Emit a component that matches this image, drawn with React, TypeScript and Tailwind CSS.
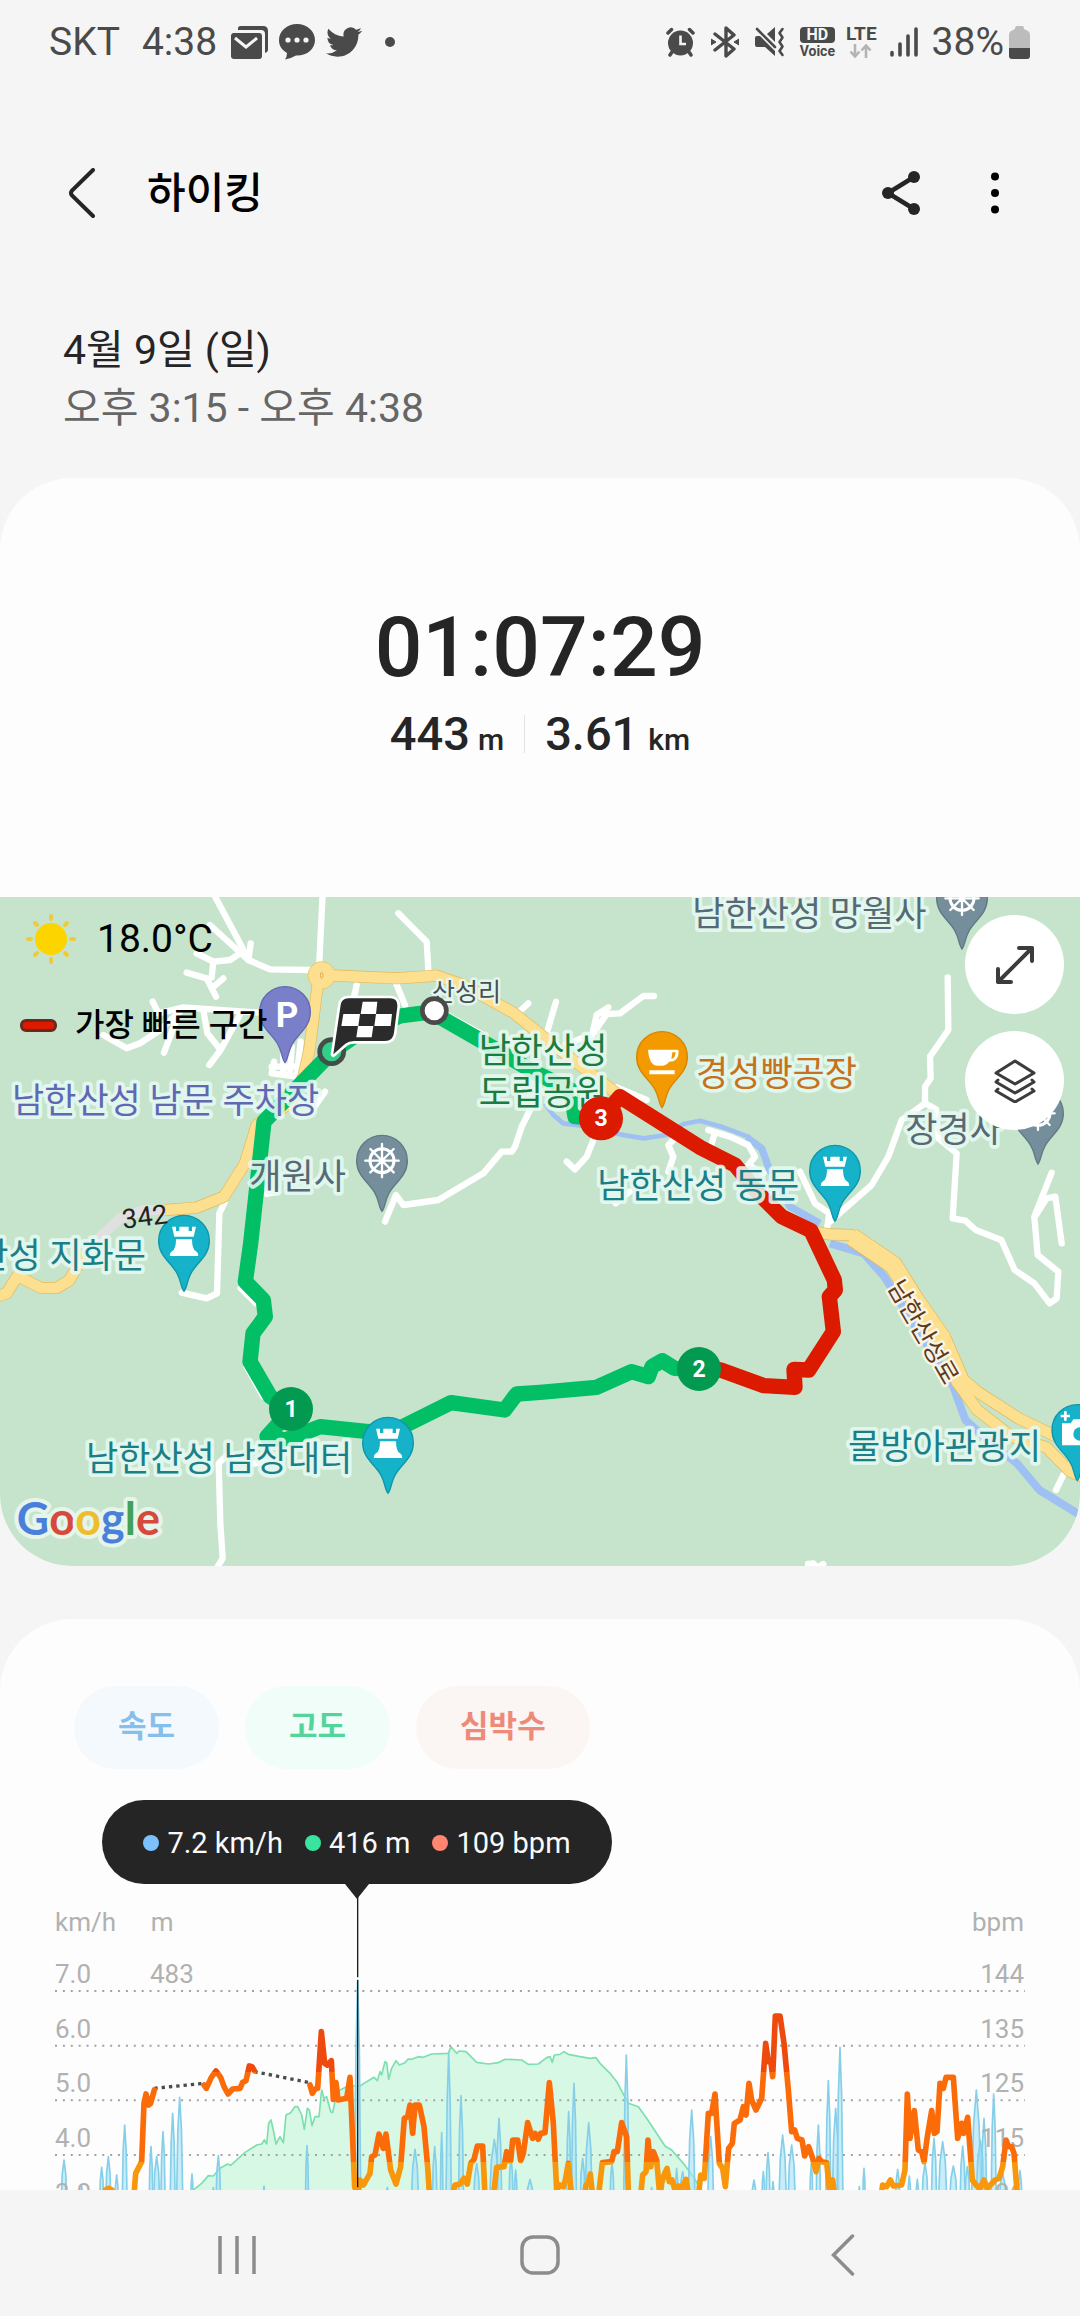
import type { ReactNode } from "react";

const FONT = "font-['Roboto','Noto_Sans_CJK_KR',sans-serif]";

/* ---------- status bar icons ---------- */

function MailIcon() {
  return (
    <svg viewBox="0 0 37 34" className="h-[34px] w-[37px]" aria-hidden="true">
      <path d="M7 3 Q7 1 10 1 H32 Q37 1 37 6 V25 Q37 27 34 28 V9 Q34 5 30 5 H7Z" fill="#4a4a4a" />
      <rect x="0" y="8" width="31" height="26" rx="3" fill="#4a4a4a" />
      <path d="M4 13 L15 22 L26 13" fill="none" stroke="#f5f5f5" strokeWidth="3" />
    </svg>
  );
}

function ChatIcon() {
  return (
    <svg viewBox="0 0 36 36" className="h-[36px] w-[36px]" aria-hidden="true">
      <path d="M18 0 C8 0 0 7 0 16 C0 22 3 26 8 29 Q8 33 6 35.500 Q13 34 17 31.500 C28 32 36 25 36 16 C36 7 28 0 18 0Z" fill="#4a4a4a" />
      <circle cx="9" cy="16" r="2.600" fill="#f5f5f5" />
      <circle cx="18" cy="16" r="2.600" fill="#f5f5f5" />
      <circle cx="27" cy="16" r="2.600" fill="#f5f5f5" />
    </svg>
  );
}

function TwitterIcon() {
  return (
    <svg viewBox="0 2 24 20" className="h-[30px] w-[36px]" aria-hidden="true">
      <path
        fill="#4a4a4a"
        d="M23.953 4.570a10 10 0 01-2.825.775 4.958 4.958 0 002.163-2.723c-.951.555-2.005.959-3.127 1.184a4.920 4.920 0 00-8.384 4.482C7.690 8.095 4.067 6.130 1.640 3.162a4.822 4.822 0 00-.666 2.475c0 1.710.870 3.213 2.188 4.096a4.904 4.904 0 01-2.228-.616v.060a4.923 4.923 0 003.946 4.827 4.996 4.996 0 01-2.212.085 4.936 4.936 0 004.604 3.417 9.867 9.867 0 01-6.102 2.105c-.390 0-.779-.023-1.170-.067a13.995 13.995 0 007.557 2.209c9.053 0 13.998-7.496 13.998-13.985 0-.210 0-.420-.015-.630A9.935 9.935 0 0024 4.590z"
      />
    </svg>
  );
}

function AlarmIcon() {
  return (
    <svg viewBox="0 0 29 30" className="h-[30px] w-[29px]" aria-hidden="true">
      <g stroke="#4a4a4a" strokeWidth="3.500" strokeLinecap="round">
        <path d="M2 6 L5.500 2.500 M27 6 L23.500 2.500 M6 25 L4 28 M23 25 L25 28" />
      </g>
      <circle cx="14.500" cy="16" r="12.500" fill="#4a4a4a" />
      <path d="M14.500 8.500 V17 H20" fill="none" stroke="#f5f5f5" strokeWidth="2.600" />
    </svg>
  );
}

function BluetoothIcon() {
  return (
    <svg viewBox="0 0 28 32" className="h-[32px] w-[28px]" aria-hidden="true">
      <path d="M4 8 L23 23 L15 30 V2 L23 9 L4 24" fill="none" stroke="#4a4a4a" strokeWidth="3.400" strokeLinejoin="round" strokeLinecap="round" />
      <path d="M0 13 L5 16 L0 19Z M28 13 L23 16 L28 19Z" fill="#4a4a4a" stroke="#4a4a4a" strokeWidth="1" strokeLinejoin="round" />
    </svg>
  );
}

function MuteIcon() {
  return (
    <svg viewBox="0 0 30 30" className="h-[30px] w-[30px]" aria-hidden="true">
      <path d="M0 11 Q0 9 2 9 H5 L20 24 V29 L10 20 H2 Q0 20 0 18Z" fill="#4a4a4a" />
      <path d="M12 7 L20 0 V15Z" fill="#4a4a4a" />
      <path d="M2 2 L20 20" stroke="#4a4a4a" strokeWidth="2.600" strokeLinecap="round" />
      <path d="M27.500 2 L24.500 6 L27.500 10.500 L24.500 15 L27.500 19.500 L24.500 24 L27.500 28" fill="none" stroke="#4a4a4a" strokeWidth="2.600" strokeLinecap="round" strokeLinejoin="round" />
    </svg>
  );
}

function SignalIcon() {
  return (
    <svg viewBox="0 0 28 30" className="h-[30px] w-[28px]" aria-hidden="true">
      <path d="M2 25.500 V28 M10 17 V28 M18 9 V28 M26 2 V28" stroke="#4a4a4a" strokeWidth="3.600" strokeLinecap="round" />
    </svg>
  );
}

function BatteryIcon() {
  return (
    <svg viewBox="0 0 21 33" className="h-[33px] w-[21px]" aria-hidden="true">
      <path d="M6 3 Q6 0 8 0 H13 Q15 0 15 3 L19 5 Q21 6 21 9 V22 H0 V9 Q0 6 2 5Z" fill="#bcbcbc" />
      <path d="M0 22 H21 V30 Q21 33 18 33 H3 Q0 33 0 30Z" fill="#4a4a4a" />
    </svg>
  );
}

function StatusBar() {
  return (
    <div className="flex h-[84px] shrink-0 items-center justify-between pr-[50px] pl-[49px] text-[39px] leading-none text-[#4a4a4a]">
      <div className="flex items-center">
        <span>SKT</span>
        <span className="ml-[22px]">4:38</span>
        <div className="ml-[14px] flex items-center gap-[11px]">
          <MailIcon />
          <ChatIcon />
          <TwitterIcon />
        </div>
        <span className="ml-[23px] size-[10px] rounded-full bg-[#4a4a4a]" />
      </div>
      <div className="flex items-center">
        <div className="flex items-center gap-[16px]">
          <AlarmIcon />
          <BluetoothIcon />
          <MuteIcon />
        </div>
        <div className="ml-[15px] flex flex-col items-center gap-[2px]">
          <span className="flex h-[16px] w-[35px] items-center justify-center rounded-[4px] bg-[#4a4a4a] text-[16px] leading-none font-bold text-[#f5f5f5]">HD</span>
          <span className="text-[14px] leading-[12px] font-bold">Voice</span>
        </div>
        <div className="ml-[11px] flex flex-col items-center gap-[2px]">
          <span className="text-[19px] leading-[16px] font-bold">LTE</span>
          <svg viewBox="0 0 24 14" className="h-[14px] w-[24px]" aria-hidden="true">
            <path d="M6 0 V12 M1.500 7.500 L6 12.500 L10.500 7.500 M17 14 V2 M12.500 6.500 L17 1.500 L21.500 6.500" fill="none" stroke="#b4b4b4" strokeWidth="2.600" />
          </svg>
        </div>
        <div className="ml-[13px]">
          <SignalIcon />
        </div>
        <span className="ml-[14px]">38%</span>
        <div className="ml-[5px]">
          <BatteryIcon />
        </div>
      </div>
    </div>
  );
}

/* ---------- header ---------- */

function Header() {
  return (
    <header className="flex h-[218px] shrink-0 items-center pr-[55px] pl-[52px]">
      <button type="button" aria-label="뒤로" className="flex size-[60px] items-center justify-center">
        <svg viewBox="0 0 26 50" className="h-[50px] w-[26px]">
          <path d="M24 2 L3 22.500 Q1 25 3 27.500 L24 48" fill="none" stroke="#252525" strokeWidth="4" strokeLinecap="round" />
        </svg>
      </button>
      <h1 className="ml-[35px] flex-1 pt-[2px] text-[42px] leading-[60px] font-medium text-black">하이킹</h1>
      <button type="button" aria-label="공유" className="flex size-[60px] items-center justify-center">
        <svg viewBox="0 0 38 44" className="h-[44px] w-[38px]">
          <path d="M32 6 L6 22 L32 38" fill="none" stroke="#252525" strokeWidth="4.600" />
          <circle cx="6" cy="22" r="6" fill="#252525" />
          <circle cx="32" cy="6" r="6" fill="#252525" />
          <circle cx="32" cy="38" r="6" fill="#252525" />
        </svg>
      </button>
      <button type="button" aria-label="더보기" className="ml-[34px] flex size-[60px] items-center justify-center">
        <svg viewBox="0 0 8 42" className="h-[42px] w-[8px]">
          <circle cx="4" cy="4.500" r="4" />
          <circle cx="4" cy="21" r="4" />
          <circle cx="4" cy="37.500" r="4" />
        </svg>
      </button>
    </header>
  );
}

/* ---------- map ---------- */

const ROADS = [
  "M640 10 L720 160 L745 210 L810 238 L930 240",
  "M630 105 L745 210 L752 160",
  "M590 190 L640 215 L690 210 L720 190",
  "M560 248 L620 265 L648 320 M640 215 L635 262 M670 265 L635 295",
  "M968 10 L958 215",
  "M458 335 L475 370 L550 352 L780 368",
  "M310 435 L380 475 L420 460 L480 420 L550 355 M492 488 L525 400",
  "M610 360 L622 430 L662 480 L628 525 M662 480 L722 370",
  "M822 515 L815 550 L890 560 L902 455 M850 490 V550 M875 470 L870 550 M815 530 H895",
  "M975 605 L940 655",
  "M1070 285 L1060 330",
  "M800 912 L832 906",
  "M675 935 L658 970 L651 1210 L620 1225 L545 1208",
  "M1195 70 L1280 155 L1285 240",
  "M1190 285 L1215 345",
  "M1340 375 L1440 430 L1540 500 L1640 560",
  "M1585 340 L1550 372",
  "M1668 335 L1640 430",
  "M1962 318 H1930 L1860 370 L1820 372 L1780 430 L1660 480 M1825 352 L1790 375 L1775 440",
  "M1590 660 L1565 710 L1545 770 L1535 785 L1505 785 L1450 850 L1315 930 L1210 945 L1188 915 L1155 995",
  "M1700 815 L1725 838 L1760 800 L1782 745",
  "M1850 592 L1940 630",
  "M2020 750 L2005 765 L2020 800 L2005 845",
  "M2125 720 L2190 740 L2245 765 L2265 800 L2245 825 L2290 850 M2145 728 L2132 770",
  "M2843 262 L2845 420 L2790 500 L2792 565 L2775 590 V640 L2705 690 L2665 800 L2615 885 L2490 995",
  "M2400 845 L2445 940 L2488 970 L2482 1010",
  "M2775 640 L2808 658 L2815 745 L2870 790 L2858 985 L2896 992 L2927 1020 L3004 1050 L3044 1140 L3103 1180 L3149 1240 L3170 1225 L3175 1145 L3113 1095 L3103 980 L3155 848",
  "M3108 975 L3140 925 L3166 920 L3185 1060",
  "M800 1715 L754 1722 L682 1695 L656 1720 L661 1900 L668 2005 L650 2035",
  "M3190 1755 L3168 1800",
  "M2424 2022 L2440 2020 L2452 2034 L2470 2022",
  "M1847 940 L1889 905",
  "M722 1195 L768 1240 M740 1430 L790 1520",
];

const HIGHWAYS = [
  "M965 255 L1190 265 L1310 257 L1390 285 L1540 368 L1680 480 L1840 602 L1900 650",
  "M955 270 L928 480 L910 560 L870 640 L770 705 L735 820 L672 920 L590 953 L495 960",
  "M250 1085 L232 1130 L207 1172 L170 1194 L124 1194 L52 1158 L20 1210 L-20 1222",
  "M2440 1025 L2488 1033 L2555 1035 L2680 1118 L2746 1220 L2839 1350 L2891 1470 L2932 1505 L3056 1585 L3170 1640 L3260 1680",
  "M2850 1420 L2870 1475 L2932 1560 L3035 1640 L3139 1672 L3211 1745 L3260 1765",
];

const GREEN_ROUTE =
  "M1300 365 L1200 378 L1090 420 L995 487 L792 695 L752 1060 L736 1175 L790 1230 L796 1280 L759 1330 L750 1415 L811 1520 L873 1560 L801 1640 L857 1650 L961 1610 L1105 1625 L1188 1620 L1353 1538 L1514 1560 L1550 1512 L1620 1507 L1790 1492 L1894 1445 L1945 1460 L1956 1430 L1987 1412 L2023 1435 L2095 1437 M1300 370 L1440 450 L1600 545 L1712 600 L1725 680 L1800 685";

const RED_ROUTE =
  "M1803 685 L1860 620 L2100 772 L2205 825 L2275 910 L2345 980 L2433 1022 L2503 1170 L2506 1200 L2488 1220 L2500 1325 L2426 1440 L2382 1438 L2385 1492 L2292 1487 L2162 1440 L2097 1437";

type Label = { x: number; y: number; text: string; fill: string; end?: boolean };

const GRAY = "#566a76";
const TEAL = "#1b7f88";

const LABELS: Label[] = [
  { x: 36, y: 668, text: "남한산성 남문 주차장", fill: "#6068b4" },
  { x: 748, y: 896, text: "개원사", fill: GRAY },
  { x: 1436, y: 518, text: "남한산성", fill: "#1a7c3e" },
  { x: 1436, y: 646, text: "도립공원", fill: "#1a7c3e" },
  { x: 2088, y: 588, text: "경성빵공장", fill: "#c6721c" },
  { x: 2077, y: 108, text: "남한산성 망월사", fill: GRAY },
  { x: 2716, y: 756, text: "장경사", fill: GRAY },
  { x: 1792, y: 924, text: "남한산성 동문", fill: TEAL },
  { x: 438, y: 1134, text: "남한산성 지화문", fill: TEAL, end: true },
  { x: 258, y: 1742, text: "남한산성 남장대터", fill: TEAL },
  { x: 2544, y: 1708, text: "물방아관광지", fill: TEAL },
];

function Pin({ x, y, fill, edge, children }: { x: number; y: number; fill: string; edge: string; children: ReactNode }) {
  return (
    <g transform={`translate(${x} ${y})`}>
      <path
        d="M0 2 C-10 -10 -8 -30 -22 -54 C-40 -86 -76 -104 -76 -150 A76 76 0 0 1 76 -150 C76 -104 40 -86 22 -54 C8 -30 10 -10 0 2Z"
        fill={fill}
        stroke={edge}
        strokeWidth="4"
      />
      <g transform="translate(0 -150)">{children}</g>
    </g>
  );
}

function Castle() {
  return (
    <path
      fill="#fff"
      d="M-36 -42 H-24 V-29 H-14 V-42 H14 V-29 H24 V-42 H36 L29 -12 H-29Z M-24 -4 H24 Q24 26 36 32 Q43 36 43 46 H-43 Q-43 36 -36 32 Q-24 26 -24 -4Z"
    />
  );
}

function Wheel() {
  return (
    <g stroke="#fff" fill="none" strokeLinecap="round">
      <circle r="36" strokeWidth="9" />
      <path d="M0 -50 V50 M-50 0 H50 M-35 -35 L35 35 M-35 35 L35 -35" strokeWidth="7" />
      <circle r="9" fill="#fff" />
    </g>
  );
}

function KmMarker({ x, y, n, fill }: { x: number; y: number; n: string; fill: string }) {
  return (
    <g>
      <circle cx={x} cy={y} r="66" fill={fill} />
      <text x={x} y={y + 24} textAnchor="middle" fontSize="69" fontWeight="700" fill="#fff">
        {n}
      </text>
    </g>
  );
}

function HikeMap() {
  return (
    <svg viewBox="0 21 3240 2007" className="block h-auto w-full" role="img" aria-label="하이킹 경로 지도">
      <rect y="21" width="3240" height="2007" fill="#c5e4cb" />
      <g fill="none" stroke="#9fc0f3" strokeLinejoin="round">
        <path strokeWidth="14" d="M1635 640 L1660 675 L1690 700 L1750 708 L1860 733 L1930 745 L2000 735 L2050 702 L2100 692 L2170 712 L2250 742" />
        <path strokeWidth="22" d="M2240 742 L2285 775 L2305 830 L2370 950 L2460 1000" />
        <path strokeWidth="24" d="M2490 1060 L2591 1090 L2653 1160 L2715 1260 L2860 1490 L2896 1590 L2963 1650 L3051 1720 L3118 1800 L3245 1878" />
      </g>
      <g fill="none" stroke="#fff" strokeWidth="19" strokeLinecap="round" strokeLinejoin="round">
        {ROADS.map((d) => (
          <path key={d} d={d} />
        ))}
      </g>
      <path d="M505 960 L430 960 L360 985 L300 1040 L250 1095" fill="none" stroke="#dfe0df" strokeWidth="30" />
      <g fill="none" strokeLinejoin="round">
        <g stroke="#e3b95a" strokeWidth="36">
          {HIGHWAYS.map((d) => (
            <path key={d} d={d} />
          ))}
          <path d="M2555 1040 L2680 1125 L2746 1230 L2830 1350" strokeWidth="56" />
        </g>
        <circle cx="965" cy="256" r="41" fill="#fddf90" stroke="#e3b95a" strokeWidth="2" />
        <g stroke="#fddf90" strokeWidth="32">
          {HIGHWAYS.map((d) => (
            <path key={d} d={d} />
          ))}
          <path d="M2555 1040 L2680 1125 L2746 1230 L2830 1350" strokeWidth="52" />
        </g>
        <ellipse cx="965" cy="256" rx="4" ry="9" stroke="#dcae4a" strokeWidth="3" />
      </g>

      <g fill="none" strokeWidth="46" strokeLinejoin="round" strokeLinecap="round">
        <path d={GREEN_ROUTE} stroke="#02bf65" />
        <path d={RED_ROUTE} stroke="#dc1a00" />
      </g>

      <Pin x={855} y={516} fill="#7a7fc9" edge="#6468b0">
        <text x="6" y="46" textAnchor="middle" fontSize="105" fontWeight="700" fill="#fff">
          P
        </text>
      </Pin>
      <Pin x={1146} y={962} fill="#758e9c" edge="#617885">
        <Wheel />
      </Pin>
      <Pin x={2886} y={175} fill="#758e9c" edge="#617885">
        <Wheel />
      </Pin>
      <Pin x={3114} y={820} fill="#758e9c" edge="#617885">
        <Wheel />
      </Pin>
      <Pin x={1986} y={651} fill="#f29a00" edge="#d98200">
        <path fill="#fff" d="M-42 -22 H46 Q50 -22 50 -16 Q50 14 22 14 Q12 26 0 26 H-14 Q-38 26 -42 -22Z M-38 40 H38 V52 H-38Z" />
        <path d="M31 -14 H41 Q40 4 28 6Z" fill="#f29a00" />
      </Pin>
      <Pin x={2505} y={992} fill="#15b2c9" edge="#0e96ab">
        <Castle />
      </Pin>
      <Pin x={552} y={1202} fill="#15b2c9" edge="#0e96ab">
        <Castle />
      </Pin>

      <g fontSize="105" strokeLinejoin="round" strokeWidth="22" stroke="#e6f9f2" strokeOpacity="0.9" style={{ paintOrder: "stroke" }}>
        <text x="1296" y="333" fontSize="75" fill="#474e56" strokeWidth="15">
          산성리
        </text>
        {LABELS.map((l) => (
          <text key={l.text} x={l.x} y={l.y} fill={l.fill} textAnchor={l.end ? "end" : "start"}>
            {l.text}
          </text>
        ))}
        <text transform="translate(2770 1326) rotate(60)" textAnchor="middle" y="26" fontSize="75" strokeWidth="15" stroke="#fff8ea" fill="#5c3a1c">
          남한산성로
        </text>
        <text transform="translate(370 1016) rotate(-7)" fontSize="81" stroke="none" fill="#222">
          342
        </text>
      </g>

      <Pin x={1164} y={1808} fill="#15b2c9" edge="#0e96ab">
        <Castle />
      </Pin>
      <Pin x={3232} y={1770} fill="#15b2c9" edge="#0e96ab">
        <path fill="#fff" d="M-46 -20 H-20 L-12 -32 H30 V46 H-46Z M-50 -46 H-40 V-56 H-32 V-46 H-22 V-38 H-32 V-28 H-40 V-38 H-50Z" />
        <circle cx="8" cy="12" r="20" fill="#15b2c9" />
      </Pin>

      <KmMarker x={873} y={1557} n="1" fill="#029a51" />
      <KmMarker x={2097} y={1437} n="2" fill="#029a51" />
      <KmMarker x={1803} y={685} n="3" fill="#dc1a00" />

      <circle cx="1303" cy="362" r="36" fill="#fff" stroke="#4a4a4a" strokeWidth="14" />
      <circle cx="995" cy="485" r="36" fill="#2fd188" stroke="#454d49" strokeWidth="14" />
      <path
        d="M1045 325 H1170 Q1194 325 1192 350 L1182 428 Q1179 453 1155 453 H1062 Q1046 453 1036 461 L1000 493 L1022 345 Q1025 325 1045 325Z"
        fill="#2b2b2b"
        stroke="#fff"
        strokeWidth="16"
        strokeLinejoin="round"
        style={{ paintOrder: "stroke" }}
      />
      <path d="M1088 335 H1132 L1128 372 H1082Z M1030 372 H1080 L1075 408 H1024Z M1128 372 H1176 L1172 408 H1123Z M1074 408 H1120 L1115 442 H1069Z" fill="#fff" />

      <g fontFamily="Lato" fontSize="135" fontWeight="700" strokeLinejoin="round">
        <text x="50" y="1934" stroke="#e6f5ea" strokeWidth="24" style={{ paintOrder: "stroke" }}>
          <tspan fill="#4a80dc">G</tspan>
          <tspan fill="#d54a3d">o</tspan>
          <tspan fill="#edbd2c">o</tspan>
          <tspan fill="#4a80dc">g</tspan>
          <tspan fill="#45a158">l</tspan>
          <tspan fill="#d54a3d">e</tspan>
        </text>
      </g>
    </svg>
  );
}

function MapPanel() {
  return (
    <div className="relative">
      <HikeMap />
      <div className="absolute top-[17px] left-[20px] flex flex-col gap-[36px] text-black">
        <div className="flex h-[50px] items-center">
          <svg viewBox="-25 -25 50 50" className="ml-[6px] size-[50px]" aria-hidden="true">
            <g stroke="#eecb3c" strokeWidth="4" strokeLinecap="round">
              <path d="M0 -23 V-20 M0 23 V20 M-23 0 H-20 M23 0 H20 M-16 -16 L-14 -14 M16 -16 L14 -14 M-16 16 L-14 14 M16 16 L14 14" />
            </g>
            <circle r="16" fill="#fcd400" />
          </svg>
          <span className="ml-[21px] text-[39px] leading-[50px]">18.0°C</span>
        </div>
        <div className="flex h-[50px] items-center">
          <span className="h-[13px] w-[37px] rounded-[6px] border-3 border-[#6b2a20] bg-[#dc1a00]" />
          <span className="ml-[18px] text-[32px] leading-[50px] font-medium">가장 빠른 구간</span>
        </div>
      </div>
      <div className="absolute top-[18px] right-[16px] flex flex-col gap-[17px]">
        <button type="button" aria-label="지도 확대" className="flex size-[99px] items-center justify-center rounded-full bg-white">
          <svg viewBox="0 0 38 38" className="size-[38px]" fill="none" stroke="#3c3c3c" strokeWidth="4" strokeLinecap="round" strokeLinejoin="round">
            <path d="M2 36 L36 2 M23 2 H36 V15 M2 23 V36 H15" />
          </svg>
        </button>
        <button type="button" aria-label="지도 유형" className="flex size-[99px] items-center justify-center rounded-full bg-white">
          <svg viewBox="0 0 44 44" className="size-[44px]" fill="none" stroke="#3c3c3c" strokeWidth="3" strokeLinecap="round" strokeLinejoin="round">
            <path d="M22 2 L41 14 L22 25 L3 14Z" />
            <path d="M5 21 L3 23 L22 34 L41 23 L39 21" />
            <path d="M5 30 L3 32 L22 43 L41 32 L39 30" />
          </svg>
        </button>
      </div>
    </div>
  );
}

/* ---------- summary ---------- */

function Summary() {
  return (
    <section className="overflow-hidden rounded-[72px] bg-[#fdfdfd]">
      <div className="flex flex-col items-center pt-[120px] pb-[133px] font-medium text-[#252525]">
        <p className="text-[84px] leading-[100px]">01:07:29</p>
        <div className="mt-[6px] flex items-center text-[47px] leading-[60px]">
          <p>
            443<span className="ml-[8px] text-[30px] leading-none">m</span>
          </p>
          <span className="mx-[20px] h-[38px] w-px bg-[#e3e3e3]" />
          <p>
            3.61<span className="ml-[10px] text-[30px] leading-none">km</span>
          </p>
        </div>
      </div>
      <MapPanel />
    </section>
  );
}

/* ---------- chart ---------- */

/* Each entry: centre x, top y, half width at the base. */
const SPEED: [number, number, number][] = [
  [192, 810, 11], [305, 832, 8], [325, 800, 10], [350, 855, 7], [374, 705, 9], [453, 770, 7], [470, 800, 12],
  [489, 725, 8], [518, 670, 9], [539, 622, 11], [576, 852, 5], [245, 888, 5], [640, 893, 8], [655, 797, 9], [792, 888, 4],
  [921, 767, 6], [1073, 270, 10], [1162, 892, 8], [1245, 778, 14], [1304, 770, 9], [1325, 728, 5], [1346, 490, 9],
  [1383, 617, 9], [1430, 820, 12], [1483, 748, 18], [1497, 685, 10], [1533, 800, 8], [1547, 840, 6], [1590, 868, 14],
  [1706, 665, 8], [1722, 580, 9], [1748, 805, 10], [1766, 698, 13], [1836, 820, 8], [1879, 495, 9], [1955, 893, 8],
  [2030, 835, 6], [2048, 845, 12], [2075, 660, 12], [2132, 740, 11], [2262, 870, 9], [2290, 845, 6], [2304, 788, 8],
  [2319, 875, 5], [2348, 735, 14], [2375, 765, 14], [2434, 820, 6], [2455, 705, 8], [2485, 572, 9], [2507, 655, 12],
  [2520, 472, 10], [2578, 890, 4], [2592, 835, 5], [2693, 838, 9], [2728, 858, 6], [2752, 868, 6], [2775, 820, 12],
  [2802, 745, 10], [2828, 755, 16], [2860, 828, 15], [2888, 768, 10], [2902, 830, 10], [2929, 600, 17], [2941, 750, 16],
  [2952, 685, 10], [2981, 612, 9], [3008, 850, 14], [3060, 842, 8],
];

const ELEVATION =
  "L580 900 L605 880 L625 857 L640 858 L660 835 L683 822 L692 826 L712 808 L735 787 L770 765 L785 762 L793 750 L800 762 L806 700 L813 690 L820 720 L828 762 L840 740 L850 758 L858 675 L872 668 L885 650 L893 650 L905 675 L913 718 L922 655 L928 660 L936 707 L945 680 L957 680 L965 600 L972 625 L980 620 L992 665 L998 668 L1008 620 L1020 600 L1045 588 L1080 588 L1100 575 L1122 562 L1132 572 L1140 545 L1145 555 L1155 515 L1160 518 L1166 568 L1175 535 L1188 512 L1198 525 L1215 518 L1225 507 L1235 508 L1255 500 L1270 502 L1295 492 L1345 490 L1353 470 L1370 490 L1377 483 L1398 485 L1430 517 L1465 522 L1495 518 L1515 508 L1565 510 L1585 523 L1615 522 L1640 503 L1650 500 L1657 517 L1663 495 L1680 493 L1692 485 L1705 493 L1740 500 L1770 505 L1788 503 L1800 520 L1830 550 L1850 575 L1885 640 L1915 650 L1940 685 L1995 768 L2015 780 L2050 820 L2080 860 L2095 885 L2160 980";

const HEART = [
  "M316 900 L326 895 L336 900",
  "M400 940 L407 850 L425 815 L432 640 L438 612 L446 645 L452 640 L463 600",
  "M612 585 L619 595 L634 562 L648 543 L662 562 L672 590 L684 612 L698 597 L720 595 L728 577 L738 572 L748 528 L756 530 L763 542",
  "M930 585 L937 610 L945 597 L953 595 L964 425 L974 520 L982 525 L994 512 L1000 628 L1008 578 L1014 630 L1040 625 L1050 562 L1064 890 L1073 915 L1080 870 L1090 885 L1110 850 L1115 800 L1125 795 L1137 732 L1150 775 L1158 732 L1172 840 L1188 882 L1202 830 L1213 685 L1223 680 L1230 645 L1238 730 L1245 645 L1258 645 L1272 710 L1283 830 L1290 940",
  "M1352 940 L1365 885 L1380 882 L1392 865 L1402 882 L1412 820 L1422 808 L1432 768 L1448 768 L1456 940",
  "M1478 940 L1490 832 L1512 830 L1520 785 L1525 812 L1532 812 L1538 750 L1553 750 L1562 812 L1570 790 L1583 698 L1598 745 L1605 730 L1615 748 L1622 730 L1635 728 L1648 578 L1660 700 L1670 900 L1680 885 L1690 890 L1696 870 L1705 820 L1717 940",
  "M1750 940 L1758 885 L1765 880 L1771 852 L1780 940",
  "M1793 940 L1807 818 L1835 815 L1842 785 L1852 785 L1865 698 L1880 740 L1886 940",
  "M1920 940 L1928 855 L1938 845 L1944 750 L1952 830 L1960 785 L1970 810 L1980 925 L1985 880 L1992 855 L2001 835 L2008 875 L2016 870 L2025 900 L2035 888 L2045 895 L2058 868 L2070 940",
  "M2093 940 L2102 855 L2113 865 L2125 670 L2135 670 L2145 612 L2158 820 L2168 835 L2176 890 L2186 775 L2197 760 L2203 700 L2220 690 L2230 650 L2238 675 L2247 580 L2255 630 L2268 660 L2285 625 L2297 460 L2305 515 L2312 510 L2318 560 L2326 378 L2340 378 L2352 460 L2365 600 L2375 725 L2384 720 L2392 745 L2406 750 L2414 798 L2426 770 L2438 805 L2448 845 L2457 805 L2465 815 L2480 818 L2488 895 L2498 870 L2507 940",
  "M2640 940 L2648 885 L2660 890 L2671 870 L2680 888 L2705 885 L2715 840 L2722 612 L2730 745 L2743 662 L2755 780 L2765 785 L2772 815 L2782 740 L2795 662 L2803 730 L2811 725 L2820 580 L2830 595 L2838 562 L2860 562 L2873 745 L2885 700 L2891 730 L2903 682 L2917 870 L2928 885 L2940 895 L2952 870 L2962 895 L2985 870 L2997 865 L3008 830 L3018 750 L3026 770 L3035 770 L3042 790 L3054 940",
];

const GRID = [
  { y: 303, left: "7.0", mid: "483", right: "144" },
  { y: 467, left: "6.0", right: "135" },
  { y: 631, left: "5.0", right: "125" },
  { y: 795, left: "4.0", right: "115" },
  { y: 959, left: "3.0", right: "106" },
];

function Chart() {
  return (
    <svg viewBox="0 -18 3240 1038" className="block h-auto w-full" role="img" aria-label="속도, 고도, 심박수 그래프">
      <defs>
        <linearGradient id="hr" gradientUnits="userSpaceOnUse" x1="0" y1="0" x2="0" y2="1000">
          <stop offset="0.545" stopColor="#ee4a0e" />
          <stop offset="0.545" stopColor="#fb6c08" />
          <stop offset="0.815" stopColor="#fb6c08" />
          <stop offset="0.815" stopColor="#f8960c" />
        </linearGradient>
      </defs>
      <path d={`M540 1020 ${ELEVATION} V1020Z`} fill="#d8f8e6" />
      <path d={`M560 915 ${ELEVATION}`} fill="none" stroke="#7cdfae" strokeWidth="5" strokeLinejoin="round" />
      <g stroke="#a2a2a2" strokeWidth="6" strokeDasharray="6 17.640">
        {GRID.map((g) => (
          <path key={g.y} d={`M165 ${g.y} H3075`} />
        ))}
      </g>
      <g fill="#a5e2f8" fillOpacity="0.600" stroke="#86cfe8" strokeWidth="5" strokeLinejoin="round">
        {SPEED.map(([x, top, w]) => (
          <path key={x} d={`M${x - w} 1020 L${x - w / 2} ${top + (960 - top) * 0.3} L${x} ${top} L${x + w / 2} ${top + (960 - top) * 0.3} L${x + w} 1020`} />
        ))}
      </g>
      <path d="M463 595 L612 580 M763 545 L930 578" stroke="#4c4c4c" strokeWidth="10" strokeDasharray="10 12" />
      <g fontSize="78" fill="#b1b1b1">
        <text x="165" y="123">km/h</text>
        <text x="452" y="123">m</text>
        <text x="3072" y="123" textAnchor="end">bpm</text>
        {GRID.map((g) => (
          <g key={g.y}>
            <text x="165" y={g.y - 24}>{g.left}</text>
            {g.mid && <text x="450" y={g.y - 24}>{g.mid}</text>}
            <text x="3072" y={g.y - 24} textAnchor="end">{g.right}</text>
          </g>
        ))}
      </g>
      <g fill="none" stroke="url(#hr)" strokeWidth="17" strokeLinejoin="round" strokeLinecap="round">
        {HEART.map((d) => (
          <path key={d} d={d} />
        ))}
      </g>
      <path d="M1073 -18 V262 M1073 270 V892" stroke="#1c1c1c" strokeWidth="4" />
    </svg>
  );
}

const CHIPS = [
  { label: "속도", tone: "bg-[#f4f9fe] text-[#86bfeb]" },
  { label: "고도", tone: "bg-[#f0fdf8] text-[#54d49a]" },
  { label: "심박수", tone: "bg-[#fbf5f4] text-[#ee8a78]" },
];

const READINGS = [
  { value: "7.2 km/h", dot: "bg-[#7cc0ff]" },
  { value: "416 m", dot: "bg-[#38e4a0]" },
  { value: "109 bpm", dot: "bg-[#ff8670]" },
];

function ChartCard() {
  return (
    <section className="mt-[53px] rounded-t-[72px] bg-[#fdfdfd] pt-[67px]">
      <div className="flex gap-[26px] pl-[74px]">
        {CHIPS.map((c) => (
          <button key={c.label} type="button" className={`h-[83px] rounded-full px-[44px] text-[31px] font-bold ${c.tone}`}>
            {c.label}
          </button>
        ))}
      </div>
      <div className="relative mt-[31px] ml-[102px] flex h-[84px] w-[510px] items-center justify-center gap-[22px] rounded-full bg-[#252525] pt-[2px] text-[29px] leading-[40px] whitespace-nowrap text-[#fafafa]">
        {READINGS.map((r) => (
          <span key={r.value} className="flex items-center gap-[8px]">
            <span className={`size-[16px] rounded-full ${r.dot}`} />
            {r.value}
          </span>
        ))}
        <svg viewBox="0 0 24 15" className="absolute top-full left-1/2 h-[15px] w-[24px] -translate-x-1/2" aria-hidden="true">
          <path d="M0 0 H24 L12 15Z" fill="#252525" />
        </svg>
      </div>
      <Chart />
    </section>
  );
}

/* ---------- navigation bar ---------- */

function NavBar() {
  return (
    <nav className="grid h-[126px] shrink-0 grid-cols-3 items-center bg-[#f5f5f5] px-[85px] pt-[4px]">
      <button type="button" aria-label="최근 앱" className="mx-auto flex size-[60px] items-center justify-center">
        <svg viewBox="0 0 38 40" className="h-[40px] w-[38px]">
          <path d="M2 1 V39 M19 1 V39 M36 1 V39" stroke="#8c8c8c" strokeWidth="3.500" />
        </svg>
      </button>
      <button type="button" aria-label="홈" className="mx-auto flex size-[60px] items-center justify-center">
        <svg viewBox="0 0 40 40" className="size-[40px]">
          <rect x="2" y="2" width="36" height="36" rx="11" fill="none" stroke="#8c8c8c" strokeWidth="3.500" />
        </svg>
      </button>
      <button type="button" aria-label="뒤로 가기" className="mx-auto flex size-[60px] items-center justify-center">
        <svg viewBox="0 0 24 42" className="h-[42px] w-[24px]">
          <path d="M21.500 2 L2.500 21 L21.500 40" fill="none" stroke="#8c8c8c" strokeWidth="3.500" strokeLinecap="round" />
        </svg>
      </button>
    </nav>
  );
}

export default function App() {
  return (
    <div className={`flex h-screen flex-col bg-[#f5f5f5] ${FONT}`}>
      <StatusBar />
      <Header />
      <main className="min-h-0 flex-1 overflow-y-auto [scrollbar-width:none]">
        <div className="px-[63px] pt-[19px] pb-[41px] text-[41px] leading-[58px]">
          <p className="text-[#252525]">4월 9일 (일)</p>
          <p className="text-[#666666]">오후 3:15 - 오후 4:38</p>
        </div>
        <Summary />
        <ChartCard />
      </main>
      <NavBar />
    </div>
  );
}
